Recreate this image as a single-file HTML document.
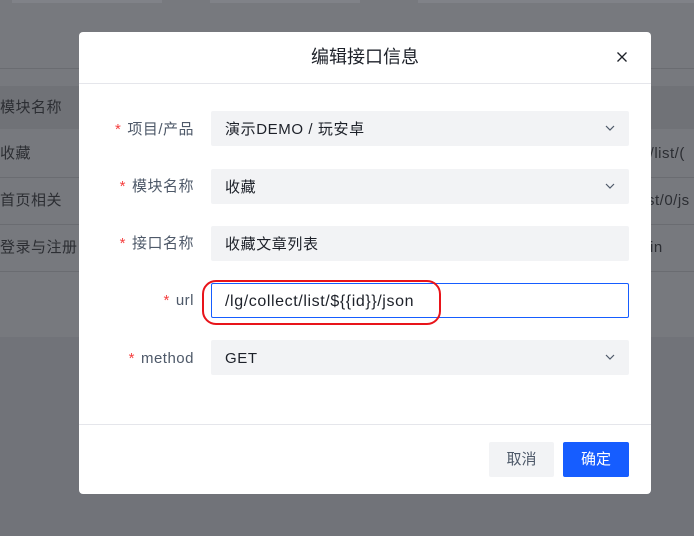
<!DOCTYPE html>
<html><head><meta charset="utf-8"><style>
*{margin:0;padding:0;box-sizing:border-box}
body{width:694px;height:536px;overflow:hidden;background:#717379;position:relative;font-family:"Liberation Sans","Noto Sans CJK SC",sans-serif;}
.bg{position:absolute;left:0;top:0;width:694px;height:337px;background:#77797e}
.tb{position:absolute;top:0;height:3px;background:#808288}
.hl{position:absolute;left:0;width:694px;height:1px;background:#6a6c71}
.hdr{position:absolute;left:0;top:86px;width:694px;height:43px;background:#707277}
.bt{position:absolute;font-size:15px;color:#2c2e33;line-height:20px;letter-spacing:0.5px}
.modal{position:absolute;left:79px;top:32px;width:572px;height:462px;background:#fff;border-radius:4px}
.title{position:absolute;left:0;top:0;width:572px;height:52px;border-bottom:1px solid #e5e6eb;text-align:center;line-height:50px;font-size:18px;color:#1d2129}
.close{position:absolute;left:537px;top:19px}
.lab{position:absolute;right:457px;font-size:15px;color:#4e5969;line-height:20px;white-space:nowrap;letter-spacing:0.5px}
.lab b{color:#f53f3f;font-weight:normal;margin-right:6px}
.inp{position:absolute;left:132px;width:418px;height:35px;background:#f2f3f5;border-radius:2px;font-size:15px;color:#1d2129;line-height:37px;padding-left:14px;letter-spacing:0.6px}
.arr{position:absolute;right:14px;top:14px}
.foot{position:absolute;left:0;top:392px;width:572px;height:1px;background:#e5e6eb}
.btn{position:absolute;top:410px;height:35px;line-height:36px;text-align:center;font-size:15px;border-radius:2px}
</style></head><body>
<div class="bg"></div>
<div class="tb" style="left:12px;width:150px"></div>
<div class="tb" style="left:210px;width:150px"></div>
<div class="tb" style="left:418px;width:276px"></div>
<div class="hl" style="top:68px"></div>
<div class="hdr"></div>
<div class="hl" style="top:177px"></div>
<div class="hl" style="top:224px"></div>
<div class="hl" style="top:271px"></div>
<div class="bt" style="left:0;top:98px">模块名称</div>
<div class="bt" style="left:0;top:144px">收藏</div>
<div class="bt" style="left:0;top:191px">首页相关</div>
<div class="bt" style="left:0;top:238px">登录与注册</div>
<div class="bt" style="left:645px;top:144px">t/list/(</div>
<div class="bt" style="left:647px;top:191px">st/0/js</div>
<div class="bt" style="left:650px;top:238px">in</div>
<div class="modal">
<div class="title">编辑接口信息</div>
<svg class="close" width="12" height="12" viewBox="0 0 12 12"><path d="M1.5 1.5l9 9M10.5 1.5l-9 9" stroke="#1d2129" stroke-width="1.3"/></svg>
<div class="lab" style="top:88px"><b>*</b>项目/产品</div>
<div class="inp" style="top:79px">演示DEMO / 玩安卓<svg class="arr" width="10" height="7" viewBox="0 0 10 7"><path d="M1 1l4 4 4-4" stroke="#4e5969" fill="none" stroke-width="1.2"/></svg></div>
<div class="lab" style="top:145px"><b>*</b>模块名称</div>
<div class="inp" style="top:137px">收藏<svg class="arr" width="10" height="7" viewBox="0 0 10 7"><path d="M1 1l4 4 4-4" stroke="#4e5969" fill="none" stroke-width="1.2"/></svg></div>
<div class="lab" style="top:202px"><b>*</b>接口名称</div>
<div class="inp" style="top:194px">收藏文章列表</div>
<div class="lab" style="top:259px"><b>*</b>url</div>
<div class="inp" style="top:251px;background:#fff;border:1px solid #165dff;line-height:35px;padding-left:13px;font-size:16px;letter-spacing:0.6px">/lg/collect/list/${{id}}/json</div>
<div style="position:absolute;left:123px;top:248px;width:239px;height:45px;border:2px solid #e8141a;border-radius:14px"></div>
<div class="lab" style="top:317px"><b>*</b>method</div>
<div class="inp" style="top:308px">GET<svg class="arr" width="10" height="7" viewBox="0 0 10 7"><path d="M1 1l4 4 4-4" stroke="#4e5969" fill="none" stroke-width="1.2"/></svg></div>
<div class="foot"></div>
<div class="btn" style="left:410px;width:65px;background:#f2f3f5;color:#4e5969">取消</div>
<div class="btn" style="left:484px;width:66px;background:#165dff;color:#fff">确定</div>
</div>
</body></html>
